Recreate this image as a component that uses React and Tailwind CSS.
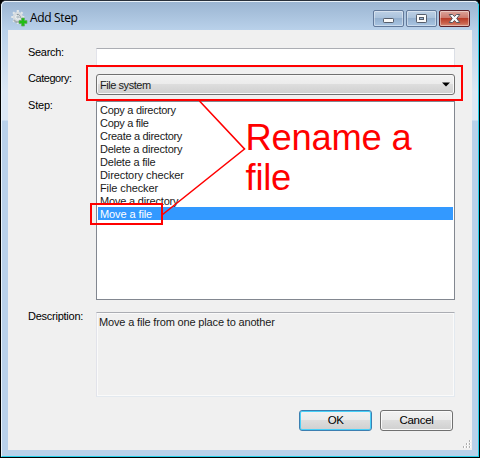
import React from "react";

const steps = [
  { name: "Copy a directory", w: "tracking-[-0.28px]" },
  { name: "Copy a file", w: "tracking-[-0.3px]" },
  { name: "Create a directory", w: "tracking-[-0.3px]" },
  { name: "Delete a directory", w: "tracking-[-0.22px]" },
  { name: "Delete a file", w: "tracking-[-0.2px]" },
  { name: "Directory checker", w: "tracking-[-0.1px]" },
  { name: "File checker", w: "tracking-[-0.1px]" },
  { name: "Move a directory", w: "tracking-[-0.18px]" },
  { name: "Move a file", w: "tracking-[-0.1px]" },
];

function GearIcon() {
  return (
    <svg className="h-[18px] w-[18px] shrink-0" viewBox="0 0 18 18">
      <path d="M3 11L7 14.5L12.5 15L14 8L10 12Z" fill="#8d979b" />
      <g transform="translate(7.8 8)">
        <path d="M0-7V7M-6.5 0H6.5M-4.7-4.7L4.7 4.7M4.7-4.7L-4.7 4.7" stroke="#e4e8ea" strokeWidth="2.2" />
        <circle r="5" fill="#d8dde0" />
        <path d="M-4 3A5 5 0 0 0 4 3" fill="none" stroke="#a4aeb2" strokeWidth="1.6" />
        <circle r="2.1" fill="#b9c4ca" stroke="#f2f5f6" />
        <path d="M-1-2.5A2.7 2.7 0 0 1 2.3 1" fill="none" stroke="#89959b" />
      </g>
      <path d="M11.5 9h3v2.5H17v3h-2.5V17h-3v-2.5H9v-3h2.5z" fill="#21bd16" stroke="#69a868" strokeWidth=".7" />
    </svg>
  );
}

function CaptionButton({ kind }) {
  const color =
    kind === "close"
      ? "border-[#5b2029] bg-[linear-gradient(#dca59b_0%,#cd7a6d_45%,#b93d29_50%,#c9604a_80%,#d58b78_100%)]"
      : "border-[#62799a] bg-[linear-gradient(#bdd0e5_0%,#aac2dc_45%,#94b0cf_50%,#a9c5e2_100%)]";
  return (
    <div className={"flex h-[17px] w-[31px] items-center justify-center rounded-[2px] border shadow-[inset_0_0_0_1px_#ffffff66] " + color}>
      <svg width="13" height="11" viewBox="0 0 13 11">
        {kind === "min" && <rect x="1.5" y="5.5" width="10" height="4" rx=".7" fill="#fafafa" stroke="#555d6b" />}
        {kind === "max" && (
          <>
            <rect x="1.5" y="1.5" width="10" height="8" rx=".7" fill="#fafafa" stroke="#555d6b" />
            <rect x="4.5" y="4.5" width="4" height="2" fill="#9bb7d6" stroke="#555d6b" />
          </>
        )}
        {kind === "close" && (
          <path d="M1.2 1.5h3.2l2.1 2 2.1-2h3.2L8.7 5.5l3.1 4H8.6l-2.1-2-2.1 2H1.2l3.1-4z" fill="#fafafa" stroke="#555861" />
        )}
      </svg>
    </div>
  );
}

function Field({ label, className, labelClass, children }) {
  return (
    <div className={"flex " + className}>
      <div className={"w-[68px] shrink-0 whitespace-nowrap leading-[13px] " + labelClass}>{label}</div>
      {children}
    </div>
  );
}

export default function App() {
  return (
    <div className="relative h-[458px] w-[480px] overflow-hidden bg-black font-['Liberation_Sans',Arial,sans-serif] text-[11px] text-black">
      <div className="flex h-[458px] flex-col rounded-t-[6px] border border-t-[#28303b] border-r-black border-b-black border-l-black bg-[#b9d1ea]">
        <div className="flex h-[456px] flex-col rounded-t-[5px] border border-t-[#e9f1f8] border-r-[#25cfe8] border-b-[#25cfe8] border-l-[#eaf4fb] bg-[linear-gradient(#9bb5d2_0px,#b9d1ea_28px,#dce8f5_90px,#dce8f5_118px,#b9d1ea_119px)] px-[6px] pb-[6px]">
          <header className="flex h-[28px] shrink-0 items-start">
            <div className="flex flex-1 items-center gap-[2px] pt-[7px] pl-[2px]">
              <GearIcon />
              <span className="font-['Open_Sans',sans-serif] text-[12px] leading-[18px] tracking-[-0.35px]">Add Step</span>
            </div>
            <div className="flex gap-[2px] pt-[8px] pr-[2px]">
              <CaptionButton kind="min" />
              <CaptionButton kind="max" />
              <CaptionButton kind="close" />
            </div>
          </header>
          <main className="flex flex-1 flex-col bg-[#f0f0f0] pt-[18px] pr-[17px] pl-[20px]">
            <Field label="Search:" className="h-[26px]" labelClass="-mt-[2px] tracking-[-0.3px]">
              <div className="h-[20px] w-[359px] border border-t-[#abadb3] border-r-[#dbdfe6] border-b-[#e3e9ef] border-l-[#e2e3ea] bg-white" />
            </Field>
            <Field label="Category:" className="h-[27px]" labelClass="-mt-[2px] tracking-[-0.45px]">
              <div className="flex h-[21px] w-[359px] items-center justify-between rounded-[3px] border border-[#707070] bg-[linear-gradient(#f2f2f2_0%,#ebebeb_49%,#dddddd_50%,#cfcfcf_100%)] pr-[4px] pl-[3px] shadow-[inset_0_0_0_1px_#f8f8f8]">
                <span className="pt-[2px] leading-[13px] tracking-[-0.45px] text-[#1a1a1a]">File system</span>
                <svg width="8" height="5" viewBox="0 0 8 5"><path d="M0 .5h8L4 4.5z" /></svg>
              </div>
            </Field>
            <Field label="Step:" className="h-[211px]" labelClass="-mt-[2px] tracking-[-0.2px]">
              <div className="h-[199px] w-[359px] border border-[#828790] bg-white px-px pt-px">
                {steps.map((s, i) => (
                  <div key={s.name} className={"h-[13px] pl-[2px] leading-[15px] " + s.w + (i === 8 ? " bg-[#3399ff] text-white" : " text-[#1a1a1a]")}>
                    {s.name}
                  </div>
                ))}
              </div>
            </Field>
            <Field label="Description:" className="h-[98px]" labelClass="-mt-[2px] tracking-[-0.25px]">
              <div className="h-[85px] w-[359px] border border-t-[#abadb3] border-r-[#e3e9ef] border-b-[#e3e9ef] border-l-[#e2e3ea] pt-[3px] pl-[2px] leading-[13px] tracking-[-0.16px] text-[#1a1a1a] shadow-[inset_0_0_0_1px_#fafafa]">
                Move a file from one place to another
              </div>
            </Field>
            <div className="flex justify-end gap-[8px] pr-[2px]">
              <button className="h-[21px] w-[73px] rounded-[3px] border border-[#3c7fb1] bg-[linear-gradient(#f2f2f2_0%,#ebebeb_49%,#dddddd_50%,#cfcfcf_100%)] text-[11.5px] leading-[17px] tracking-[-0.5px] shadow-[inset_0_0_0_1px_#48d0f8]">OK</button>
              <button className="h-[21px] w-[73px] rounded-[3px] border border-[#707070] bg-[linear-gradient(#f2f2f2_0%,#ebebeb_49%,#dddddd_50%,#cfcfcf_100%)] text-[11.5px] leading-[17px] tracking-[-0.3px] shadow-[inset_0_0_0_1px_#fafafa]">Cancel</button>
            </div>
          </main>
        </div>
      </div>
      <svg className="absolute top-[440px] left-[462px]" width="10" height="10" viewBox="0 0 10 10">
        <path d="M7 0h2v2H7zM4 3h2v2H4zM7 3h2v2H7zM1 6h2v2H1zM4 6h2v2H4zM7 6h2v2H7z" fill="#fff" />
        <path d="M7 0h1v2H7zM4 3h1v2H4zM7 3h1v2H7zM1 6h1v2H1zM4 6h1v2H4zM7 6h1v2H7z" fill="#b0b0b0" />
      </svg>
      <svg className="absolute top-0 left-0" width="480" height="458" viewBox="0 0 480 458" fill="none" stroke="#ff0000">
        <rect x="87" y="66" width="375" height="34" strokeWidth="2" />
        <rect x="91" y="204" width="71" height="20" strokeWidth="2" />
        <path d="M199.5 101L244.5 149L162 215" strokeWidth="1.6" />
      </svg>
      <div className="absolute top-[118px] left-[245.5px] w-[190px] text-[36.3px] leading-[40px] tracking-[-0.2px] text-[#ff0000]">
        Rename a<br />file
      </div>
    </div>
  );
}
